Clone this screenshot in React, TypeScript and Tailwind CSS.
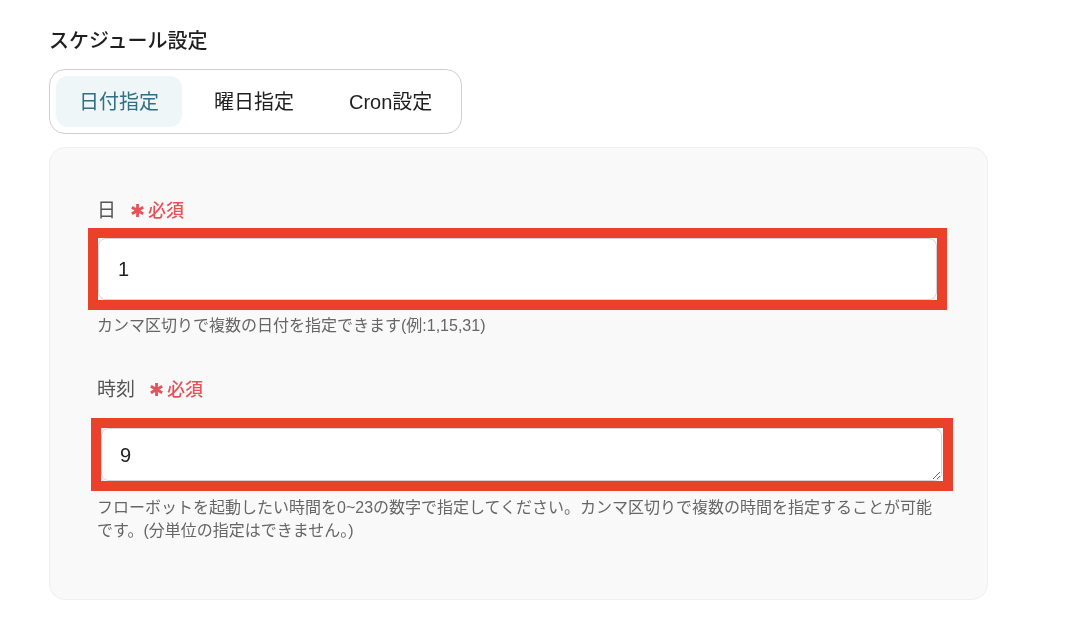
import { useState } from "react";

const font = "[font-family:'Liberation_Sans','Noto_Sans_CJK_JP',sans-serif]";

function Required() {
  return (
    <span className="ml-[14px] inline-flex items-center text-[18px] font-medium text-[#e5525a]">
      <span className="mr-[3px] text-[18px] [font-family:'DejaVu_Sans',sans-serif]">✱</span>
      必須
    </span>
  );
}

export default function App() {
  const [tab, setTab] = useState("date");
  const tabs = [
    { id: "date", label: "日付指定" },
    { id: "weekday", label: "曜日指定" },
    { id: "cron", label: "Cron設定" },
  ];

  return (
    <div className={`min-h-[642px] w-[1078px] bg-white pl-[49px] pt-[28px] text-[#222] ${font}`}>
      <div className="text-[20px] font-medium leading-[26px] text-[#1f1f1f]">スケジュール設定</div>

      {/* Tabs */}
      <div className="mt-[15px] inline-flex gap-[9px] rounded-[16px] border border-[#cfcfcf] p-[6px]">
        {tabs.map((t) => (
          <button
            key={t.id}
            onClick={() => setTab(t.id)}
            className={
              tab === t.id
                ? "h-[51px] rounded-[12px] bg-[#eef6f7] px-[23px] text-[20px] text-[#336d86]"
                : "h-[51px] rounded-[12px] px-[23px] text-[20px] text-[#1f1f1f]"
            }
          >
            {t.label}
          </button>
        ))}
      </div>

      {/* Panel */}
      <div className="mt-[13px] w-[939px] rounded-[16px] border border-[#efefef] bg-[#f9f9f9] pb-[57px] pl-[47px] pt-[51px]">
        <div className="flex items-center text-[19px] leading-[24px] text-[#555]">
          日<Required />
        </div>
        <div className="ml-[-9px] mt-[5px] w-[859px] border-[10px] border-[#e9412a]">
          <input
            defaultValue="1"
            className="block h-[62px] w-full rounded-[8px] border border-[#d4d4d4] bg-white px-[19px] text-[20px] text-[#222] outline-none"
          />
        </div>
        <div className="mt-[6px] text-[16px] leading-[20px] text-[#666]">
          カンマ区切りで複数の日付を指定できます(例:1,15,31)
        </div>

        <div className="mt-[42px] flex items-center text-[19px] leading-[24px] text-[#555]">
          時刻<Required />
        </div>
        <div className="ml-[-6px] mt-[16px] w-[862px] border-[10px] border-[#e9412a]">
          <textarea
            defaultValue="9"
            rows={1}
            className="block h-[53px] w-[841px] rounded-[8px] border border-[#d4d4d4] bg-white px-[18px] py-[12px] text-[20px] leading-[28px] text-[#222] outline-none"
          />
        </div>
        <div className="mt-[5px] w-[860px] text-[16px] leading-[23px] text-[#666]">
          フローボットを起動したい時間を0~23の数字で指定してください。カンマ区切りで複数の時間を指定することが可能
          <br />
          です。(分単位の指定はできません。)
        </div>
      </div>
    </div>
  );
}
